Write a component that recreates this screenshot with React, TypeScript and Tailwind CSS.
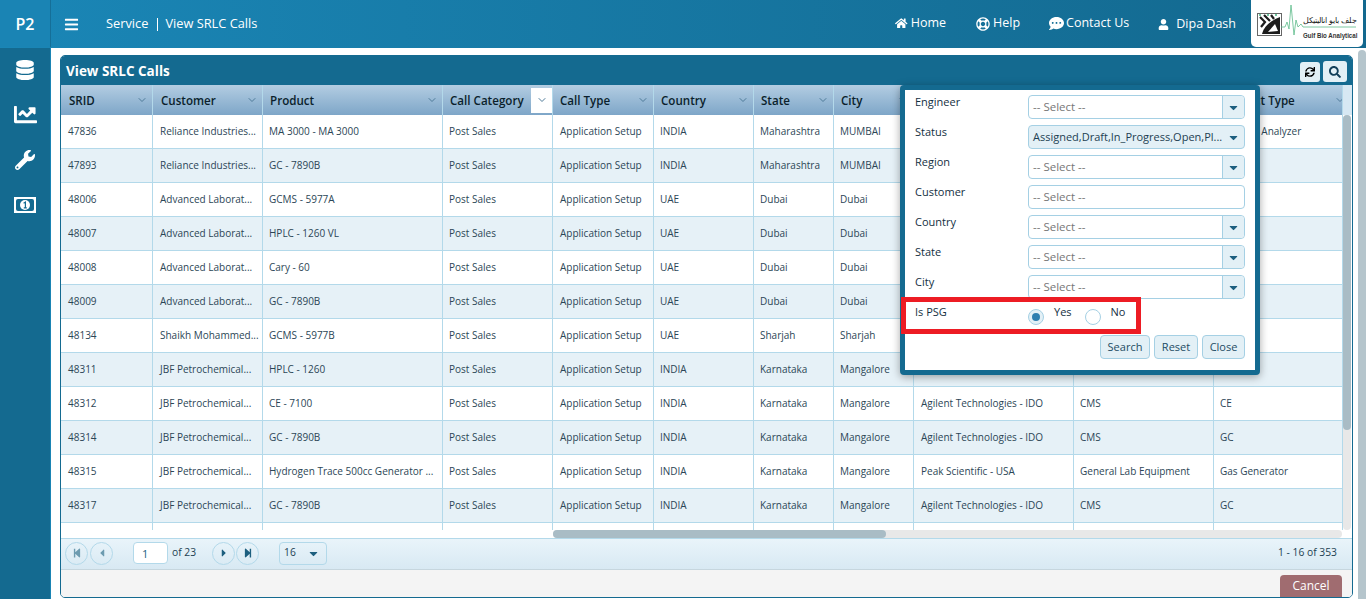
import React from "react";
import { FaBars, FaHome, FaRegLifeRing, FaCommentDots, FaUser, FaDatabase, FaChartLine, FaWrench, FaSearch, FaSync, FaCaretDown, FaStepBackward, FaStepForward, FaCaretLeft, FaCaretRight } from "react-icons/fa";
import { ChevronDown } from "lucide-react";

// two columns sit fully behind the filter popup, their titles can't be read
const columns = [
  { id: "srid", label: "SRID", w: "w-[92px]" },
  { id: "customer", label: "Customer", w: "w-[110px]" },
  { id: "product", label: "Product", w: "w-[180px]" },
  { id: "category", label: "Call Category", w: "w-[110px]" },
  { id: "type", label: "Call Type", w: "w-[101px]" },
  { id: "country", label: "Country", w: "w-[100px]" },
  { id: "state", label: "State", w: "w-[80px]" },
  { id: "city", label: "City", w: "w-[80px]" },
  { id: "hidden1", label: "", w: "w-[160px]" },
  { id: "hidden2", label: "", w: "w-[140px]" },
  { id: "ptype", label: "Product Type", w: "w-[129px]" },
];

const ag = "Agilent Technologies - IDO";
const rows = [
  ["47836", "Reliance Industries...", "MA 3000 - MA 3000", "INDIA", "Maharashtra", "MUMBAI", "", "", "Mercury Analyzer"],
  ["47893", "Reliance Industries...", "GC - 7890B", "INDIA", "Maharashtra", "MUMBAI", "", "", ""],
  ["48006", "Advanced Laborat...", "GCMS - 5977A", "UAE", "Dubai", "Dubai", "", "", ""],
  ["48007", "Advanced Laborat...", "HPLC - 1260 VL", "UAE", "Dubai", "Dubai", "", "", ""],
  ["48008", "Advanced Laborat...", "Cary - 60", "UAE", "Dubai", "Dubai", "", "", ""],
  ["48009", "Advanced Laborat...", "GC - 7890B", "UAE", "Dubai", "Dubai", "", "", ""],
  ["48134", "Shaikh Mohammed...", "GCMS - 5977B", "UAE", "Sharjah", "Sharjah", "", "", ""],
  ["48311", "JBF Petrochemical...", "HPLC - 1260", "INDIA", "Karnataka", "Mangalore", "", "", ""],
  ["48312", "JBF Petrochemical...", "CE - 7100", "INDIA", "Karnataka", "Mangalore", ag, "CMS", "CE"],
  ["48314", "JBF Petrochemical...", "GC - 7890B", "INDIA", "Karnataka", "Mangalore", ag, "CMS", "GC"],
  ["48315", "JBF Petrochemical...", "Hydrogen Trace 500cc Generator ...", "INDIA", "Karnataka", "Mangalore", "Peak Scientific - USA", "General Lab Equipment", "Gas Generator"],
  ["48317", "JBF Petrochemical...", "GC - 7890B", "INDIA", "Karnataka", "Mangalore", ag, "CMS", "GC"],
];

const filters = [
  { label: "Engineer", value: "-- Select --", arrow: true },
  { label: "Status", value: "Assigned,Draft,In_Progress,Open,Pl...", arrow: true, filled: true },
  { label: "Region", value: "-- Select --", arrow: true },
  { label: "Customer", value: "-- Select --", arrow: false },
  { label: "Country", value: "-- Select --", arrow: true },
  { label: "State", value: "-- Select --", arrow: true },
  { label: "City", value: "-- Select --", arrow: true },
];

function Cell({ w, wide, children }: { w: string; wide?: boolean; children?: React.ReactNode }) {
  return (
    <div className={`${w} shrink-0 h-full ${wide ? "pl-[7px]" : "pl-[6px]"} flex items-center border-r border-[#b3d9ea] whitespace-nowrap`}>
      {children}
    </div>
  );
}

function PagerButton({ children, dim }: { children: React.ReactNode; dim?: boolean }) {
  return (
    <button className={`w-[23px] h-[23px] rounded-full border border-[#b3d9ea] flex items-center justify-center text-[10px] ${dim ? "text-[#6d9bb0]" : "text-[#1d5f7f]"}`}>
      {children}
    </button>
  );
}

function MoneyIcon() {
  return (
    <svg width="22" height="16" viewBox="0 0 22 16">
      <rect width="22" height="16" fill="#fff" />
      <rect x="2" y="2" width="18" height="12" rx="2" fill="#146a90" />
      <circle cx="11" cy="8" r="5" fill="#fff" />
      <path d="M9.6 6.2 L11.4 5 V10.4 M9.8 10.8 H12.8" stroke="#146a90" strokeWidth="1.2" fill="none" />
    </svg>
  );
}

function Logo() {
  return (
    <div className="w-[112px] h-[47px] bg-white rounded-b-[5px] relative overflow-hidden">
      <svg className="absolute left-0 top-0" width="112" height="47" viewBox="0 0 112 47">
        <rect x="6.5" y="13.5" width="24" height="22" fill="#fff" stroke="#666" strokeWidth="1" />
        <path d="M11 34 C13 26 19 21 29 17 V34 Z" fill="#1c1c1c" />
        <path d="M9 17 L14 22 L10 27 M13 15 L19 21 M20 15 L23 19" stroke="#1c1c1c" strokeWidth="2.2" fill="none" />
        <path d="M17 32 L24 24 L27 31 Z" fill="#fff" />
        <circle cx="9" cy="15" r="1" fill="#46b583" />
        <circle cx="17" cy="15" r="1" fill="#46b583" />
        <circle cx="25" cy="15" r="1" fill="#46b583" />
        <path d="M30 27 H34 L36 22 L38 29 L40 5 L43 35 L45 20 L47 27 L50 24 L52 27 H105" stroke="#5dbb8a" strokeWidth="0.8" fill="none" />
      </svg>
      <span className="absolute right-[6px] top-[14px] text-[8px] leading-[12px] tracking-[0.5px] text-[#222] font-['Noto_Sans',sans-serif] whitespace-nowrap" dir="rtl">
        جلف بايو اناليتيكل
      </span>
      <span className="absolute right-[6px] top-[30px] origin-right scale-x-[0.82] text-[7.5px] leading-[12px] font-bold text-[#333] font-['Liberation_Sans',sans-serif] whitespace-nowrap">
        Gulf Bio Analytical
      </span>
    </div>
  );
}

export default function App() {
  return (
    <div className="font-['Open_Sans','Noto_Sans',sans-serif] w-[1366px] h-[599px] overflow-hidden flex flex-col bg-white text-[#1d3f52]">
      <header className="h-[48px] shrink-0 flex bg-gradient-to-r from-[#1a86b6] to-[#13688e] text-white">
        <div className="w-[51px] shrink-0 h-[47px] bg-[#1a84b4] border-r border-[#156f98] flex items-center justify-center text-[16px] font-semibold">P2</div>
        <div className="flex items-center flex-1">
          <FaBars className="ml-[13px] text-[15px]" />
          <div className="ml-[27px] text-[12.8px] flex items-center">
            <span>Service</span>
            <span className="ml-[9px] w-px h-[13px] bg-white" />
            <span className="ml-[7px]">View SRLC Calls</span>
          </div>
          <nav className="ml-auto flex items-center text-[12.5px] -mt-px">
            <span className="flex items-center gap-[3px]"><FaHome className="text-[12.5px]" />Home</span>
            <span className="flex items-center gap-[3px] ml-[30px]"><FaRegLifeRing className="text-[14px]" />Help</span>
            <span className="flex items-center gap-[2px] ml-[29px]"><FaCommentDots className="text-[15px]" />Contact Us</span>
            <span className="flex items-center gap-[7px] ml-[29px] mr-[15px] mt-px"><FaUser className="text-[11px]" />Dipa Dash</span>
          </nav>
          <div className="mr-[3px] self-start"><Logo /></div>
        </div>
      </header>

      <div className="flex-1 flex min-h-0">
        <aside className="w-[51px] shrink-0 bg-[#146a90] border-r border-[#1a84b4] flex flex-col items-center pt-[12px] text-white">
          <FaDatabase className="text-[20px]" />
          <FaChartLine className="text-[23px] mt-[23px]" />
          <FaWrench className="text-[20px] mt-[24px]" />
          <span className="mt-[27px]"><MoneyIcon /></span>
        </aside>

        <main className="flex-1 min-w-0 flex pt-[7px] pl-[9px]">
          <section className="w-[1293px] h-[543px] flex flex-col rounded-[5px] border border-[#146a90] overflow-hidden relative">
            <div className="h-[29px] shrink-0 bg-[#146a90] flex items-center justify-between pl-[5px] pr-[5px]">
              <h1 className="text-white text-[13.5px] font-bold pt-[2px]">View SRLC Calls</h1>
              <div className="flex items-center gap-[3px] text-[#14405a] mt-[2px]">
                <button className="w-[20px] h-[20px] rounded-[3px] bg-[#e3f0f6] flex items-center justify-center text-[10px] text-black"><FaSync /></button>
                <button className="w-[24px] h-[21px] rounded-[3px] bg-[#e3f0f6] flex items-center justify-center text-[12px]"><FaSearch /></button>
              </div>
            </div>

            <div className="h-[30px] shrink-0 flex bg-gradient-to-b from-[#b3cde2] to-[#7ea6c8] text-[11.6px] font-semibold text-[#0b1f2c]">
              {columns.map((c, i) => (
                <div key={c.id} className={`${c.w} shrink-0 h-full ${i < 2 ? "pl-[8px]" : "pl-[7px]"} flex items-center justify-between border-r border-[#b3d9ea] whitespace-nowrap overflow-hidden ${c.id === "ptype" ? "pr-0" : "pr-[4px]"}`}>
                  <span className="pt-px">{c.label}</span>
                  <span className={`flex items-center justify-center ${c.id === "category" ? "bg-white w-[21px] h-[25px] -mr-[4px]" : ""} ${c.id === "ptype" ? "-mr-[4px]" : ""}`}>
                    <ChevronDown size={12} className="text-[#4f7b99]" />
                  </span>
                </div>
              ))}
              <div className="flex-1 bg-[#d7e8f3]" />
            </div>

            <div className="h-[423px] shrink-0 flex relative text-[10px] text-[#2c4656]">
              <div className="flex-1 min-w-0 overflow-hidden">
                {rows.map((r, i) => (
                  <div key={r[0]} className={`h-[34px] flex border-b border-[#b3d9ea] ${i % 2 ? "bg-[#e6f1f7]" : "bg-white"}`}>
                    <Cell w="w-[92px]" wide>{r[0]}</Cell>
                    <Cell w="w-[110px]" wide>{r[1]}</Cell>
                    <Cell w="w-[180px]">{r[2]}</Cell>
                    <Cell w="w-[110px]">Post Sales</Cell>
                    <Cell w="w-[101px]" wide>Application Setup</Cell>
                    <Cell w="w-[100px]">{r[3]}</Cell>
                    <Cell w="w-[80px]">{r[4]}</Cell>
                    <Cell w="w-[80px]">{r[5]}</Cell>
                    <Cell w="w-[160px]" wide>{r[6]}</Cell>
                    <Cell w="w-[140px]">{r[7]}</Cell>
                    <Cell w="w-[129px]">{r[8]}</Cell>
                  </div>
                ))}
                <div className="h-[7px] flex">
                  {columns.map((c) => (
                    <div key={c.id} className={`${c.w} shrink-0 border-r border-[#b3d9ea]`} />
                  ))}
                </div>
              </div>
              <div className="w-[9px] shrink-0 bg-white pb-[8px]">
                <div className="w-[8px] h-full rounded-full bg-[#e8e8e8]"><div className="w-full h-[315px] rounded-full bg-[#a9bcc5]" /></div>
              </div>
              <div className="absolute left-[492px] right-[10px] bottom-0 h-[8px] rounded-full bg-[#e8e8e8]">
                <div className="w-[333px] h-full rounded-full bg-[#a9bcc5]" />
              </div>
            </div>

            <div className="h-[32px] shrink-0 flex items-center bg-gradient-to-b from-[#e9f4fa] to-[#d8e9f3] border-t border-[#b3d9ea] border-b border-b-[#c6d6de] pl-[4px] pr-[15px] pb-[2px] text-[10.3px]">
              <PagerButton dim><FaStepBackward /></PagerButton>
              <span className="ml-[2px]"><PagerButton dim><FaCaretLeft className="text-[12px]" /></PagerButton></span>
              <input readOnly value="1" className="ml-[20px] w-[35px] h-[22px] bg-white border border-[#b3d9ea] rounded-[4px] pl-[8px] text-[11px] text-[#1d5f7f] outline-none" />
              <span className="ml-[4px]">of 23</span>
              <span className="ml-[16px]"><PagerButton><FaCaretRight className="text-[12px]" /></PagerButton></span>
              <span className="ml-px"><PagerButton><FaStepForward /></PagerButton></span>
              <div className="ml-[20px] w-[48px] h-[23px] rounded-[4px] border border-[#b3d9ea] flex items-center justify-between pl-[4px] pr-[6px]">
                <span>16</span><FaCaretDown className="text-[13px] text-[#1d5f7f]" />
              </div>
              <span className="ml-auto">1 - 16 of 353</span>
            </div>

            <div className="flex-1 bg-[#f4f4f4] flex justify-end items-end pr-[10px]">
              <button className="w-[62px] h-[22px] rounded-t-[4px] bg-[#a06c70] text-white text-[12px]">Cancel</button>
            </div>

            <div className="absolute left-[839px] top-[29px] w-[360px] h-[290px] bg-white border-[5px] border-[#146a90] rounded-[4px] shadow-[0_2px_8px_rgba(0,0,0,0.35)] text-[#14303f] px-[10px]">
              <div className="pt-[5px] flex flex-col gap-[6px]">
                {filters.map((f) => (
                  <div key={f.label} className="flex h-[24px] text-[11px] font-medium">
                    <span className="w-[113px] shrink-0 leading-[14px]">{f.label}</span>
                    <div className={`w-[217px] h-[24px] rounded-[4px] border border-[#a5d0e4] flex items-center font-normal ${f.filled ? "bg-[#e3f0f6] text-[11px]" : "bg-white text-[11.5px]"}`}>
                      <span className={`flex-1 pl-[4px] whitespace-nowrap ${f.filled ? "text-[#1d3f52]" : "text-[#777]"}`}>{f.value}</span>
                      {f.arrow && (
                        <span className={`w-[22px] h-full flex items-center justify-center rounded-r-[4px] text-[#1d5f7f] ${f.filled ? "" : "bg-[#e3f0f6] border-l border-[#a5d0e4]"}`}>
                          <FaCaretDown className="text-[13px]" />
                        </span>
                      )}
                    </div>
                  </div>
                ))}
              </div>
              <div className="absolute left-[-4px] top-[207px] w-[240px] h-[37px] border-[5px] border-[#ed1c24]" />
              <div className="flex h-[24px] mt-[6px] text-[11px] font-medium">
                <span className="w-[113px] shrink-0 leading-[14px]">Is PSG</span>
                <span className="w-[16px] h-[16px] mt-[4px] rounded-full border border-[#a5d0e4] flex items-center justify-center bg-[#e3f0f6]"><span className="w-[8px] h-[8px] rounded-full bg-[#2e7fb0]" /></span>
                <span className="ml-[10px] leading-[14px]">Yes</span>
                <span className="ml-[13px] w-[16px] h-[16px] mt-[4px] rounded-full border border-[#a5d0e4] bg-white" />
                <span className="ml-[10px] leading-[14px]">No</span>
              </div>
              <div className="flex justify-end gap-[4px] mt-[6px] text-[11px] text-[#1d4c64]">
                <button className="w-[50px] h-[24px] rounded-[4px] border border-[#a5d0e4] bg-[#e3f0f6]">Search</button>
                <button className="w-[44px] h-[24px] rounded-[4px] border border-[#a5d0e4] bg-[#e3f0f6]">Reset</button>
                <button className="w-[43px] h-[24px] rounded-[4px] border border-[#a5d0e4] bg-[#e3f0f6]">Close</button>
              </div>
            </div>
          </section>
          <div className="ml-[5px] w-[8px] -mt-[5px] h-[549px] bg-[#b5c5cc] rounded-t-full" />
        </main>
      </div>
    </div>
  );
}
